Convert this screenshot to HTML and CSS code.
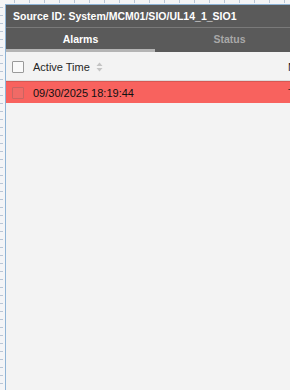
FILE: index.html
```html
<!DOCTYPE html>
<html>
<head>
<meta charset="utf-8">
<link rel="stylesheet" href="styles.css">
</head>
<body>
<div class="canvas">
  <div class="panel">
    <div class="title">Source ID: System/MCM01/SIO/UL14_1_SIO1</div>
    <div class="tabs">
      <div class="tab active">Alarms</div>
      <div class="tab">Status</div>
    </div>
    <div class="table">
      <div class="row head">
        <span class="cb"></span>
        <span class="col1">Active Time</span>
        <svg class="sort" width="7" height="12" viewBox="0 0 7 12"><path d="M0.5 5 L3.5 1.5 L6.5 5 Z" fill="#c4c4c4"/><path d="M0.5 7 L3.5 10.5 L6.5 7 Z" fill="#c4c4c4"/></svg>
        <span class="col2">Name</span>
      </div>
      <div class="row alarm">
        <span class="cb"></span>
        <span class="col1">09/30/2025 18:19:44</span>
        <span class="col2">T</span>
      </div>
    </div>
  </div>
</div>
</body>
</html>
```
FILE: styles.css
```css
html, body { margin: 0; padding: 0; }
body {
  width: 290px; height: 390px; overflow: hidden;
  background: #f4f5f7;
  font-family: "Liberation Sans", Arial, sans-serif;
}
.canvas {
  height: 390px;
  padding: 4px 0 0 5px;
  box-sizing: border-box;
  background:
    repeating-linear-gradient(to right, transparent 0 14px, #b9c6d6 14px 15px) 0 0 / 100% 3px no-repeat,
    repeating-linear-gradient(to bottom, transparent 0 7px, #b9c6d6 7px 8px) 0 0 / 3px 100% no-repeat,
    #f4f5f7;
}
.panel {
  width: 300px; height: 386px;
  background: #f3f3f3;
  border-left: 1px solid #8fb4d6;
  border-top: 1px solid #8fb4d6;
  box-sizing: border-box;
}
.title {
  height: 22px;
  background: #5a5a5a;
  color: #fff;
  font-weight: bold;
  font-size: 10.5px;
  line-height: 22px;
  padding-left: 7px;
  border-bottom: 1px solid #7a7a7a;
}
.tabs {
  display: flex;
  background: #5a5a5a;
  height: 24px;
}
.tab {
  width: 149px;
  text-align: center;
  font-size: 10.5px;
  font-weight: bold;
  color: #a8a8a8;
  line-height: 22px;
  box-sizing: border-box;
}
.tab.active {
  color: #fff;
  border-bottom: 3px solid #b4b4b4;
}
.table { padding-top: 2px; }
.row {
  display: flex;
  align-items: center;
  font-size: 11px;
  position: relative;
}
.row.head { color: #262626; height: 26px; border-bottom: 1px solid #dcdcdc; }
.cb {
  width: 12px; height: 12px;
  border: 1px solid #9a9a9a;
  background: #fafafa;
  margin-left: 6px;
  margin-right: 9px;
  box-sizing: border-box;
  border-radius: 1px;
}
.sort { margin-left: 6px; }
.col2 { position: absolute; left: 282px; color: #222; }
.row.alarm {
  height: 22px;
  background: #f8625e;
  border-top: 1px solid #d85752;
  box-sizing: border-box;
  color: #111;
}
.row.alarm .cb { background: #f06a66; border-color: #c96562; }
```
